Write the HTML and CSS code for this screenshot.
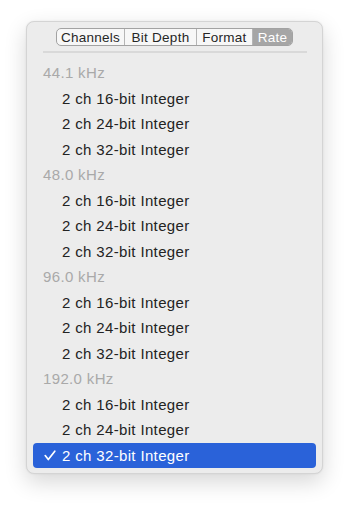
FILE: index.html
```html
<!DOCTYPE html>
<html>
<head>
<meta charset="utf-8">
<link rel="stylesheet" href="styles.css">
</head>
<body>
<div class="panel">
  <div class="toolbar">
    <div class="seg">
      <span class="seg-item s1">Channels</span>
      <span class="seg-item s2">Bit Depth</span>
      <span class="seg-item s3">Format</span>
      <span class="seg-item s4 active">Rate</span>
    </div>
  </div>
  <div class="sep"></div>
  <div class="list">
    <div class="row head">44.1 kHz</div>
    <div class="row item">2 ch 16-bit Integer</div>
    <div class="row item">2 ch 24-bit Integer</div>
    <div class="row item">2 ch 32-bit Integer</div>
    <div class="row head">48.0 kHz</div>
    <div class="row item">2 ch 16-bit Integer</div>
    <div class="row item">2 ch 24-bit Integer</div>
    <div class="row item">2 ch 32-bit Integer</div>
    <div class="row head">96.0 kHz</div>
    <div class="row item">2 ch 16-bit Integer</div>
    <div class="row item">2 ch 24-bit Integer</div>
    <div class="row item">2 ch 32-bit Integer</div>
    <div class="row head">192.0 kHz</div>
    <div class="row item">2 ch 16-bit Integer</div>
    <div class="row item">2 ch 24-bit Integer</div>
    <div class="row item selected"><svg class="check" width="12" height="11" viewBox="0 0 12 11"><path d="M1.2 5.6 L4.3 9.6 L10.8 1.2" fill="none" stroke="#ffffff" stroke-width="1.7" stroke-linecap="round" stroke-linejoin="round"/></svg><span>2 ch 32-bit Integer</span></div>
  </div>
</div>
</body>
</html>
```
FILE: styles.css
```css
html, body {
  margin: 0;
  padding: 0;
  background: #ffffff;
}
body {
  font-family: "Liberation Sans", Arial, sans-serif;
  width: 350px;
  height: 506px;
  overflow: hidden;
}
.panel {
  box-sizing: border-box;
  margin: 21px 0 0 26px;
  width: 297px;
  height: 453px;
  background: #ececec;
  border: 1px solid #d4d4d4;
  border-radius: 8px;
  box-shadow: 0 8px 22px rgba(0, 0, 0, 0.16), 0 0 2px rgba(0,0,0,0.08);
  padding: 6px 6px 0 6px;
}
.toolbar {
  display: flex;
  justify-content: flex-start;
  padding-left: 23px;
}
.seg {
  display: flex;
  height: 18px;
  border: 1px solid #a2a2a2;
  border-radius: 5px;
  background: #f7f7f7;
  overflow: hidden;
  box-sizing: border-box;
}
.seg-item {
  display: flex;
  align-items: center;
  justify-content: center;
  font-size: 13.5px;
  letter-spacing: 0.25px;
  color: #262626;
  box-sizing: border-box;
  border-right: 1px solid #b5b5b5;
}
.s1 { width: 68px; }
.s2 { width: 72px; }
.s3 { width: 56px; }
.s4 { width: 39px; border-right: none; }
.seg-item.active {
  background: #a6a6a6;
  color: #ffffff;
}
.sep {
  height: 2px;
  background: #d9d9d9;
  margin: 5px 9px 0 10px;
}
.list {
  margin-top: 7px;
  display: flex;
  flex-direction: column;
}
.row {
  height: 25.5px;
  display: flex;
  align-items: center;
  font-size: 15px;
  letter-spacing: 0.35px;
  box-sizing: border-box;
  border-radius: 4px;
}
.head {
  color: #a9a9a9;
  padding-left: 10px;
}
.item {
  color: #232323;
  padding-left: 29px;
}
.selected {
  background: #2a62d9;
  color: #ffffff;
  padding-left: 11px;
}
.check {
  display: block;
  margin-right: 6px;
  margin-top: 1px;
}
```
